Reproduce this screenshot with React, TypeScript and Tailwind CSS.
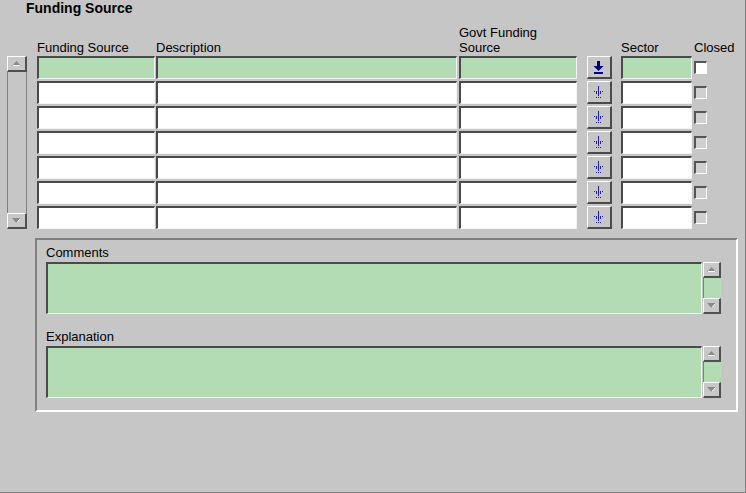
import React from "react";

const font = { fontFamily: '"Liberation Sans", Arial, sans-serif' };

// dotted pixels for the greyed-out list-of-values arrow
const dimDots: [number, number][] = [];
for (let y = 1; y < 14; y++) {
  for (let x = 0; x < 11; x++) {
    if (x % 2 !== 1) continue;
    const shaft = y <= 6 && x >= 4 && x <= 6;
    const head = y >= 6 && y <= 10 && Math.abs(x - 5) <= 10 - y;
    const bar = y === 12 && x >= 2 && x <= 8;
    if (shaft || head || bar) dimDots.push([x, y]);
  }
}

function Field({ w, green }: { w: string; green?: boolean }) {
  return (
    <div
      className={`${w} h-[23px] border-t-2 border-l-2 border-b border-r border-t-[#4a4a4a] border-l-[#4a4a4a] border-b-[#f4f4f4] border-r-[#f4f4f4] ${
        green ? "bg-[#b4dcb4]" : "bg-white"
      }`}
    />
  );
}

function ArrowUp() {
  return (
    <svg width="9" height="5" viewBox="0 0 9 5">
      <path d="M4.5 0 L9 5 L0 5 Z" fill="#8a8a8a" />
      <path d="M1 4.5 L8 4.5" stroke="#ffffff" strokeWidth="1" />
    </svg>
  );
}

function ArrowDown() {
  return (
    <svg width="9" height="5" viewBox="0 0 9 5">
      <path d="M0 0 L9 0 L4.5 5 Z" fill="#8a8a8a" />
      <path d="M8.5 0.5 L5 4.5" stroke="#ffffff" strokeWidth="1" />
    </svg>
  );
}

function ScrollBtn({ up }: { up?: boolean }) {
  return (
    <div className="h-[16px] w-full shrink-0 flex items-center justify-center bg-[#c8c8c8] border-t border-l border-b-2 border-r-2 border-t-white border-l-white border-b-[#505050] border-r-[#505050]">
      {up ? <ArrowUp /> : <ArrowDown />}
    </div>
  );
}

function LovButton({ active }: { active?: boolean }) {
  return (
    <div className="w-[25px] h-[23px] pl-[5px] pt-[3px] bg-[#c6c6c6] border-t border-l border-b-2 border-r-2 border-t-white border-l-white border-b-[#4a4a4a] border-r-[#4a4a4a]">
      {active ? (
        <svg className="block" width="12" height="14" viewBox="0 0 12 14">
          <rect x="4" y="1" width="3" height="6" fill="#00007a" />
          <path d="M0.5 6 L10.5 6 L5.5 11 Z" fill="#00007a" />
          <rect x="1" y="12" width="9" height="2" fill="#00007a" />
        </svg>
      ) : (
        <svg className="block" width="12" height="14" viewBox="0 0 12 14" shapeRendering="crispEdges">
          {dimDots.map(([x, y]) => (
            <rect key={`${x}-${y}`} x={x} y={y} width="1" height="1" fill="#2020b0" />
          ))}
        </svg>
      )}
    </div>
  );
}

function Check({ active }: { active?: boolean }) {
  return (
    <div
      className={`w-[13px] h-[13px] mt-[5px] border-t-2 border-l-2 border-b border-r border-t-[#555555] border-l-[#555555] border-b-white border-r-white ${
        active ? "bg-white" : "bg-[#d0d0d0]"
      }`}
    />
  );
}

function Row({ first }: { first?: boolean }) {
  return (
    <div className="flex items-start h-[23px]">
      <Field w="w-[118px]" green={first} />
      <div className="w-[1px]" />
      <Field w="w-[301px]" green={first} />
      <div className="w-[2px]" />
      <Field w="w-[118px]" green={first} />
      <div className="w-[10px]" />
      <LovButton active={first} />
      <div className="w-[9px]" />
      <Field w="w-[71px]" green={first} />
      <div className="w-[2px]" />
      <Check active={first} />
    </div>
  );
}

function TextArea() {
  return (
    <div className="flex h-[52px]">
      <div className="w-[656px] h-full bg-[#b4dcb4] border-t-2 border-l-2 border-b border-r border-t-[#4a4a4a] border-l-[#4a4a4a] border-b-[#f4f4f4] border-r-[#f4f4f4]" />
      <div className="w-[18px] ml-[1px] h-full flex flex-col">
        <ScrollBtn up />
        <div className="flex-1 bg-[#b4dcb4] border-l border-[#808080]" />
        <ScrollBtn />
      </div>
    </div>
  );
}

export default function App() {
  return (
    <div
      className="w-[746px] h-[493px] bg-[#c6c6c6] border-r border-b border-[#808080] text-black text-[13px] leading-[15px] overflow-hidden"
      style={font}
    >
      <div className="h-[24px] pl-[26px] pt-[1px] font-bold text-[14px] leading-[14px]">Funding Source</div>

      <div className="flex h-[32px] items-end pl-[37px] pb-[1px]">
        <div className="w-[119px]">Funding Source</div>
        <div className="w-[303px]">Description</div>
        <div className="w-[162px]">
          Govt Funding
          <br />
          Source
        </div>
        <div className="w-[73px]">Sector</div>
        <div>Closed</div>
      </div>

      <div className="flex">
        <div className="ml-[7px] w-[20px] h-[173px] flex flex-col">
          <ScrollBtn up />
          <div className="flex-1 border-l border-r border-[#808080]" />
          <ScrollBtn />
        </div>
        <div className="ml-[10px] flex flex-col gap-[2px]">
          <Row first />
          <Row />
          <Row />
          <Row />
          <Row />
          <Row />
          <Row />
        </div>
      </div>

      <div className="ml-[35px] mt-[9px] w-[703px] h-[174px] border-t-2 border-l-2 border-b-2 border-r-2 border-t-[#808080] border-l-[#808080] border-b-white border-r-white pl-[9px] pt-[4px]">
        <div className="h-[18px] leading-[18px]">Comments</div>
        <TextArea />
        <div className="h-[18px] leading-[18px] mt-[14px]">Explanation</div>
        <TextArea />
      </div>
    </div>
  );
}
